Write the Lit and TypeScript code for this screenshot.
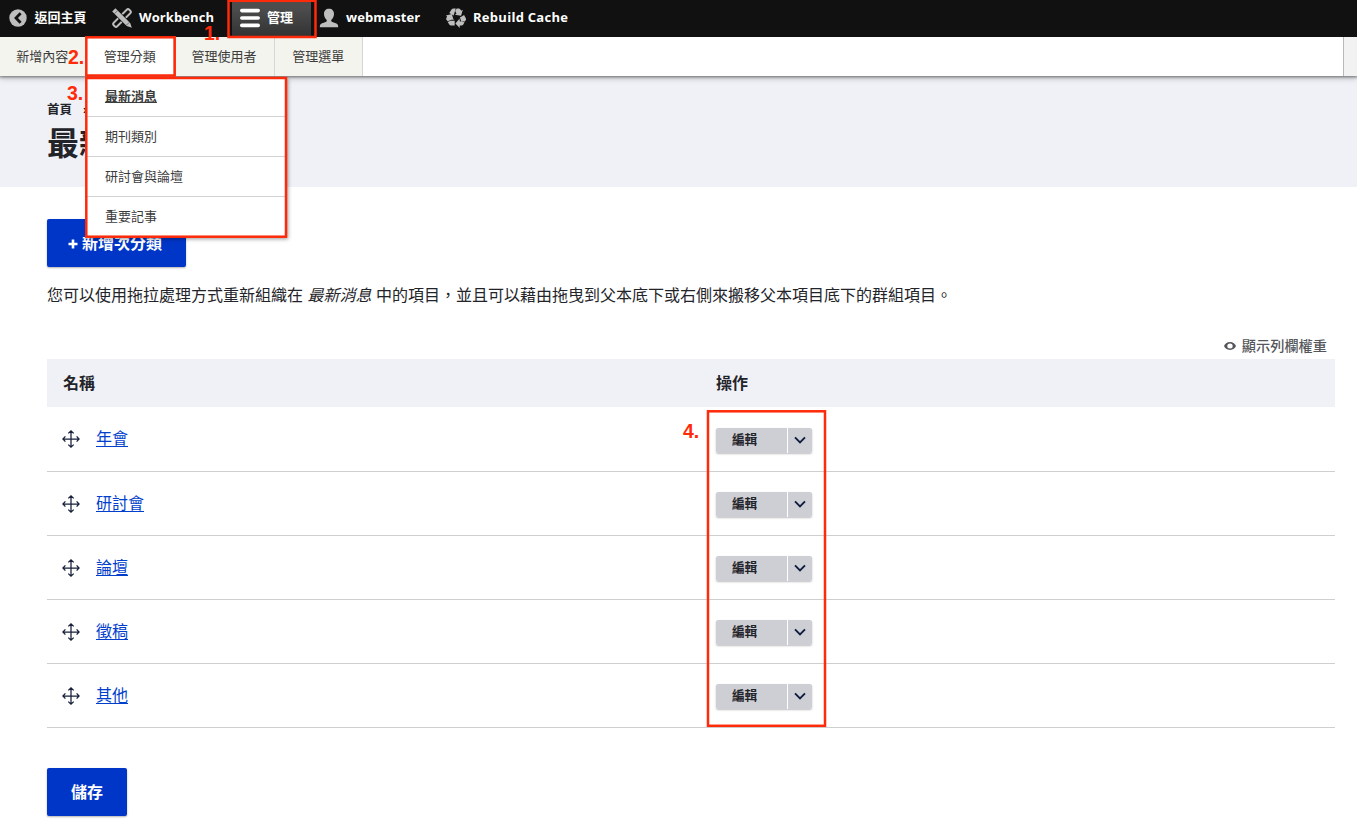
import { LitElement, html, css, svg } from "lit";
import { customElement } from "lit/decorators.js";
import { classMap } from "lit/directives/class-map.js";

const backIcon = svg`<circle cx="10" cy="10" r="8.7" fill="#bebebe"/><path d="M12.6 5.3L8 10l4.6 4.7" fill="none" stroke="#111" stroke-width="2.8"/>`;
const toolsIcon = svg`<g fill="none" stroke="#bebebe">
  <rect x="-1" y="7.500" width="22" height="5" rx="1.800" transform="rotate(-45 10 10)" stroke-width="1.900"/>
  <path d="M3.500 3.500L17 17" stroke="#111" stroke-width="6"/>
  <path d="M.2 3.400L3.400.2 18.200 14.900l1.600 4.900-5.100-1.700z" fill="#bebebe" stroke="none"/>
  <path d="M2.600 5.700L5.600 2.700M14.300 17.300l3.100-3.100" stroke="#333" stroke-width=".6"/></g>`;
const menuIcon = svg`<path d="M1.8 2.6h16.4M1.8 10h16.4M1.8 17.4h16.4" stroke="#fff" stroke-width="3.6" stroke-linecap="round"/>`;
const userIcon = svg`<path d="M10 .7c3.2 0 5 2.1 5 5 0 2.200-.9 4.500-2.400 5.800-.8 1.300-.3 2.100.8 2.600 2.500 1.100 5 1.300 5.600 3.100L19.200 19.300H.8L1 17.200c.6-1.800 3.100-2 5.600-3.100 1.100-.5 1.600-1.300.8-2.600C5.900 10.200 5 7.900 5 5.700c0-2.900 1.800-5 5-5z" fill="#bebebe"/>`;
const recycleIcon = svg`<g fill="#bebebe">
  <path d="M3.300 4.900L5.700 1.300Q6.400.5 7.500.5h2.300L7.600 7.600zM10.700.5h2q1.100 0 1.700 1l.8 1.200 1.600-.9-1.700 6-6.300-1.100 1.700-1L9.200 3z"/>
  <path d="M13.900 9.600l4.200-2.500 1.700 3.100q.5 1-.1 2l-.8 1.300-3.600.1zM18.500 14.300l-1.200 2.300q-.5 1-1.700 1h-1.900v2.300L9.400 15.500l4.300-4.900v2.700z"/>
  <path d="M8.700 12.700v4.900H5q-1.100 0-1.700-1L1.700 14l3-1.300zM1.700 13.300L.4 11.800q-.5-1 0-1.900l.7-1.400L-.3 7.700l6.100-1.600 1.900 6.200-1.600-.9z"/></g>`;

interface Tab { label: string; icon: unknown; width: number; active?: boolean }

const tabs: Tab[] = [
  { label: "返回主頁", icon: backIcon, width: 104 },
  { label: "Workbench", icon: toolsIcon, width: 128 },
  { label: "管理", icon: menuIcon, width: 79, active: true },
  { label: "webmaster", icon: userIcon, width: 127 },
  { label: "Rebuild Cache", icon: recycleIcon, width: 140 },
];
const tray = ["新增內容", "管理分類", "管理使用者", "管理選單"];
const submenu = ["最新消息", "期刊類別", "研討會與論壇", "重要記事"];
const terms = ["年會", "研討會", "論壇", "徵稿", "其他"];

@customElement("app-root")
export class AppRoot extends LitElement {
  static styles = css`
    :host {
      display: block;
      position: relative;
      height: 834px;
      overflow: hidden;
      background: #fff;
      color: #232429;
      font: 16px/24px "Liberation Sans", "Noto Sans CJK TC", sans-serif;
    }
    * { box-sizing: border-box; }
    svg { display: block; flex: none; }
    a { color: #003ecc; text-decoration: underline; text-underline-offset: 2px; }
    .bar { position: relative; z-index: 4; display: flex; height: 37px; background: #111; color: #fff; }
    .tab {
      display: flex; align-items: center; gap: 7px; padding: 0 0 2px 8px;
      font: 700 13px/18px "Open Sans", "Noto Sans CJK TC", sans-serif;
      letter-spacing: .1px;
      white-space: nowrap;
    }
    .tab:first-child { letter-spacing: 0; gap: 6.5px; }
    .tab:last-child { letter-spacing: .28px; }
    .tab span { position: relative; top: -1px; }
    .tab.active { background: linear-gradient(#4d4d4d 20%, #323232); }
    .tray {
      position: relative; z-index: 3; display: flex; height: 39px; background: #fff;
      box-shadow: 0 0 3px 1px rgba(0, 0, 0, .5), 0 3px 6px rgba(0, 0, 0, .15);
      font-size: 13px;
    }
    .item {
      position: relative; padding: 0 17.33px; border-right: 1px solid #d6d6d6;
      background: #f3f4ee; line-height: 39px; color: #3c3c3c;
    }
    .item:first-child { padding-left: 16.2px; }
    .item:nth-child(4) { padding-right: 18px; }
    .item.open { background: #fff; }
    .orient { margin-left: auto; width: 14px; border-left: 1px solid #b8b8b8; background: #f2f2f2; }
    .menu {
      position: absolute; top: 40px; left: 0; width: 199px; background: #fff;
      box-shadow: 2px 2px 4px rgba(0, 0, 0, .4);
    }
    .entry { height: 40px; padding-left: 18.4px; border-bottom: 1px solid #d2d2d2; line-height: 39px; }
    .entry:last-child { border: 0; }
    .entry.current { font-weight: 700; text-decoration: underline; }
    .header { height: 111px; padding: 24px 47px 0; background: #f0f1f7; }
    .crumb { display: flex; gap: 11px; font-size: 12.5px; line-height: 20px; font-weight: 700; }
    .title { margin: 0; font-size: 32px; line-height: 48px; font-weight: 700; }
    .content { padding: 32px 22px 0 47px; }
    .button {
      display: flex; align-items: center; justify-content: center; gap: 4px;
      height: 48px; padding-top: 2px; border-radius: 2px; background: #0036c8; color: #fff; font-weight: 700;
      box-shadow: 0 1px 2px rgba(0, 0, 0, .3);
    }
    .add { width: 139px; padding-right: 3px; }
    .save { width: 80px; margin-top: 40px; padding-top: 1px; }
    .desc { margin: 17px 0 0; white-space: nowrap; }
    .weights {
      display: flex; align-items: center; justify-content: flex-end; gap: 6px;
      height: 26px; margin: 25px 8px 0 0; font-size: 14.2px; color: #55565b; font-weight: 500;
    }
    .row { display: grid; grid-template-columns: 653px 1fr; align-items: center; height: 64px; border-bottom: 1px solid #cecfd1; }
    .row.first { height: 65px; }
    .head { height: 48px; border: 0; background: #f0f1f7; font-weight: 700; }
    .head .cell { padding-top: 1px; }
    .cell { display: flex; align-items: center; padding-left: 16px; }
    .term { gap: 15.6px; padding-left: 15.4px; }
    .split {
      display: flex; width: 96px; height: 25px; border-radius: 2px; overflow: hidden;
      background: #cecfd5; font-size: 12.6px; font-weight: 700; line-height: 24px;
    }
    .shade { margin-top: 2px; border-radius: 2px; box-shadow: 0 1px 2px rgba(0, 0, 0, .25); }
    .edit { width: 72px; padding-left: 16px; border-right: 1px solid #fff; }
    .more { display: flex; flex: 1; align-items: center; justify-content: center; padding-bottom: 1px; }
    .marks { position: absolute; inset: 0; z-index: 5; pointer-events: none; }
    .frame { fill: none; stroke: #ff2a0a; stroke-width: 2.5; }
    .num { fill: #ff2a0a; font: 700 19.500px "Liberation Sans", sans-serif; }
  `;

  private renderTerm(name: string, index: number) {
    return html`<div class=${classMap({ row: true, first: index === 0 })}>
      <div class="cell term">
        <svg width="18" height="18" viewBox="0 0 18 18" fill="none" stroke="#17203a" stroke-width="1.25">
          <path d="M9 1v16M1 9h16M6.300 3.400L9 .9l2.700 2.500M6.300 14.600L9 17.100l2.700-2.500M3.400 6.300L.9 9l2.500 2.700M14.600 6.300L17.100 9l-2.500 2.700"/>
        </svg>
        <a>${name}</a>
      </div>
      <div class="cell">
        <div class="shade"><div class="split">
          <span class="edit">編輯</span>
          <span class="more"><svg width="12" height="8" viewBox="0 0 12 8"><path d="M1 1.300l5 5 5-5" fill="none" stroke="#0f1d40" stroke-width="1.900"/></svg></span>
        </div></div>
      </div>
    </div>`;
  }

  render() {
    return html`
      <nav class="bar">
        ${tabs.map((t) => html`<div class=${classMap({ tab: true, active: !!t.active })} style="width:${t.width}px">
          <svg width="20" height="20" viewBox="0 0 20 20">${t.icon}</svg><span>${t.label}</span>
        </div>`)}
      </nav>
      <nav class="tray">
        ${tray.map((label, i) => html`<div class=${classMap({ item: true, open: i === 1 })}>${label}${i === 1
          ? html`<div class="menu">${submenu.map((s, j) => html`<div class=${classMap({ entry: true, current: j === 0 })}>${s}</div>`)}</div>`
          : ""}</div>`)}
        <div class="orient"></div>
      </nav>
      <header class="header">
        <div class="crumb"><span>首頁</span><span>›</span></div>
        <h1 class="title">最新消息</h1>
      </header>
      <main class="content">
        <div class="button add">
          <svg width="10" height="10" viewBox="0 0 10 10"><path d="M5 .5v9M.5 5h9" stroke="#fff" stroke-width="2.600"/></svg>
          <span>新增次分類</span>
        </div>
        <p class="desc">您可以使用拖拉處理方式重新組織在 <em>最新消息</em> 中的項目，並且可以藉由拖曳到父本底下或右側來搬移父本項目底下的群組項目。</p>
        <div class="weights">
          <svg width="12" height="8" viewBox="0 0 12 8"><path fill-rule="evenodd" d="M6 .1C9 .1 11.200 2 12 4 11.200 6 9 7.900 6 7.900S.8 6 0 4C.8 2 3 .1 6 .1zM6 1.500a2.700 2.500 0 1 0 0 5 2.700 2.500 0 0 0 0-5z" fill="#55565b"/></svg>
          <span>顯示列欄權重</span>
        </div>
        <div class="table">
          <div class="row head"><div class="cell">名稱</div><div class="cell">操作</div></div>
          ${terms.map((t, i) => this.renderTerm(t, i))}
        </div>
        <div class="button save">儲存</div>
      </main>
      <svg class="marks" width="1357" height="834">
        <rect class="frame" x="228.500" y=".8" width="87" height="36.200"/>
        <rect class="frame" x="86.300" y="37.300" width="88.400" height="38.200"/>
        <rect class="frame" x="86.300" y="78" width="199.700" height="158.700"/>
        <rect class="frame" x="708" y="411.300" width="117" height="314.500"/>
        <text class="num" x="204" y="40">1.</text>
        <text class="num" x="68" y="64">2.</text>
        <text class="num" x="67" y="100">3.</text>
        <text class="num" x="683" y="438">4.</text>
      </svg>`;
  }
}
